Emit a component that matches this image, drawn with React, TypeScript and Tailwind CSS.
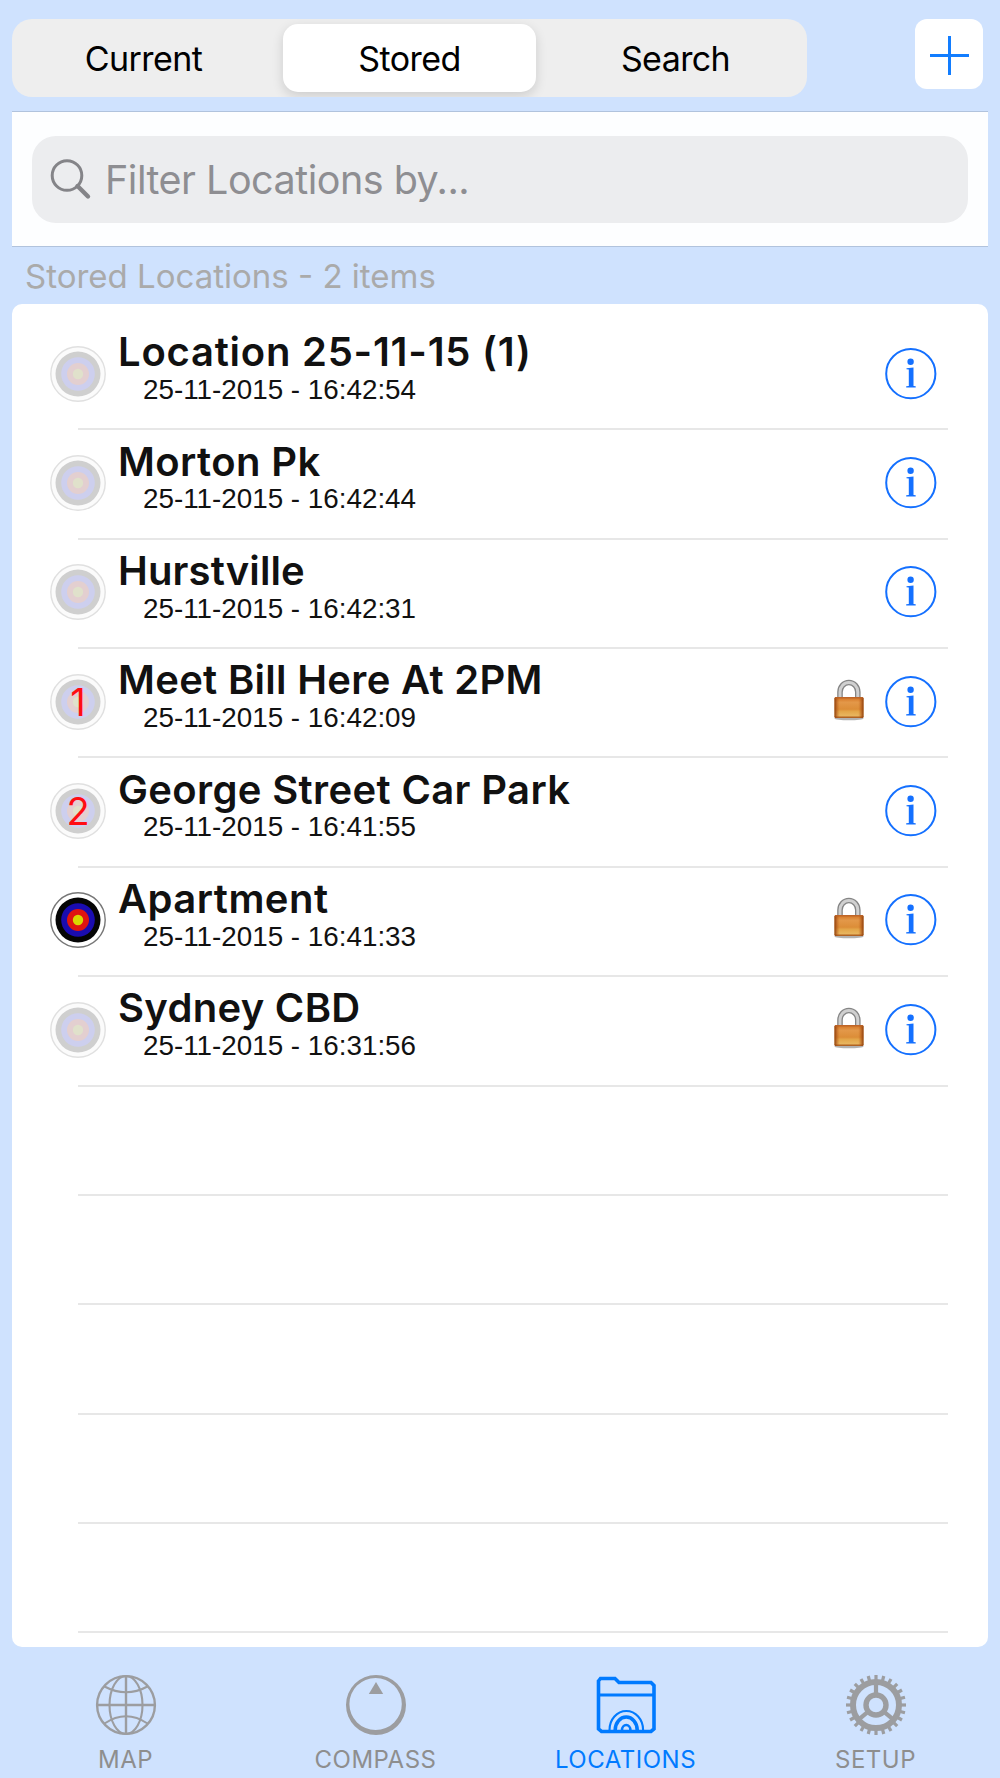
import { useState } from 'react';

type Stored = { name: string; stamp: string; tracking: string; badge?: string; active?: boolean; locked?: boolean };

const LOCATIONS: Stored[] = [
  { name: 'Location 25-11-15 (1)', stamp: '25-11-2015 - 16:42:54', tracking: 'tracking-[0.76px]' },
  { name: 'Morton Pk', stamp: '25-11-2015 - 16:42:44', tracking: 'tracking-[0.4px]' },
  { name: 'Hurstville', stamp: '25-11-2015 - 16:42:31', tracking: 'tracking-[0.12px]' },
  { name: 'Meet Bill Here At 2PM', stamp: '25-11-2015 - 16:42:09', tracking: 'tracking-[0.3px]', badge: '1', locked: true },
  { name: 'George Street Car Park', stamp: '25-11-2015 - 16:41:55', tracking: 'tracking-[0.36px]', badge: '2' },
  { name: 'Apartment', stamp: '25-11-2015 - 16:41:33', tracking: 'tracking-[0.45px]', active: true, locked: true },
  { name: 'Sydney CBD', stamp: '25-11-2015 - 16:31:56', tracking: 'tracking-[0.3px]', locked: true },
];

const EMPTY_ROWS = [0, 1, 2, 3, 4];
const SEGMENTS = ['Current', 'Stored', 'Search'];
const GEAR_TEETH = Array.from({ length: 24 }, (_, i) => i * 15);

function Target({ badge, active }: { badge?: string; active?: boolean }) {
  const [edge, rim, outer, middle, inner, core] = active
    ? ['#777', '#fff', '#050505', '#1a0cb0', '#e01410', '#d8d800']
    : ['#e0e0e0', '#fbfbfb', '#cfcfcf', '#cdcfee', '#e3cfd0', '#e0e1cb'];
  return (
    <svg viewBox="0 0 56 56" className="w-14 h-14 shrink-0">
      <circle cx="28" cy="28" r="27.2" fill={rim} stroke={edge} strokeWidth="1.4" />
      <circle cx="28" cy="28" r="22.5" fill={outer} />
      <circle cx="28" cy="28" r="16.8" fill={middle} />
      <circle cx="28" cy="28" r="11" fill={inner} />
      <circle cx="28" cy="28" r="5.2" fill={core} />
      {badge && <text x="28" y="42" textAnchor="middle" fontSize="38" fill="#ff0d12" fontFamily="Inter, sans-serif">{badge}</text>}
    </svg>
  );
}

function Lock() {
  return (
    <svg viewBox="0 0 32 42" className="w-8 h-[42px]">
      <defs>
        <linearGradient id="brass" x1="0" y1="0" x2="0" y2="1">
          <stop offset="0" stopColor="#d3701f" />
          <stop offset="0.25" stopColor="#e39849" />
          <stop offset="0.58" stopColor="#dc8d38" />
          <stop offset="0.68" stopColor="#e3a548" />
          <stop offset="0.88" stopColor="#e8b55e" />
          <stop offset="1" stopColor="#a34f14" />
        </linearGradient>
        <linearGradient id="brassEdge" x1="0" y1="0" x2="1" y2="0">
          <stop offset="0" stopColor="#8c3d0c" />
          <stop offset="0.18" stopColor="#c8641c" stopOpacity="0" />
          <stop offset="0.82" stopColor="#c8641c" stopOpacity="0" />
          <stop offset="1" stopColor="#8c3d0c" />
        </linearGradient>
      </defs>
      <ellipse cx="16" cy="39.5" rx="14.5" ry="1.7" fill="#000" opacity="0.3" />
      <path d="M7 19V13a8.900 9.500 0 0 1 17.800 0V19" fill="none" stroke="#858585" strokeWidth="5.6" />
      <path d="M7 19V13a8.900 9.500 0 0 1 17.800 0V19" fill="none" stroke="#d0d0d0" strokeWidth="3" />
      <rect x="1.5" y="18" width="29" height="21" rx="1.5" fill="url(#brass)" />
      <rect x="1.5" y="18" width="29" height="21" rx="1.5" fill="url(#brassEdge)" />
      <path d="M2 18.8h28" stroke="#b9622a" strokeWidth="1.2" />
    </svg>
  );
}

function Info() {
  return (
    <svg viewBox="0 0 52 52" className="w-[52px] h-[52px]" fill="#1470ff">
      <circle cx="25.8" cy="25.7" r="24.6" fill="none" stroke="#1470ff" strokeWidth="2" />
      <circle cx="25.6" cy="13.700" r="3.2" />
      <path d="M21.500 20.200l7-.8v18.600l2.200.3v1.300h-9.500v-1.300l2.600-.3V21.600l-2.300-.3z" />
    </svg>
  );
}

function MapIcon() {
  return (
    <svg viewBox="0 0 62 62" className="w-[62px] h-[62px]" fill="none" stroke="#9c9da0" strokeWidth="2.4">
      <circle cx="31" cy="31" r="28.900" />
      <ellipse cx="31" cy="31" rx="16.5" ry="29" strokeWidth="2.100" />
      <path d="M31 2v58M2 31h58" />
      <path d="M9.500 12.500Q31 24 52.500 12.500M9.500 49.500Q31 35 52.500 49.500" strokeWidth="2.100" />
    </svg>
  );
}

function CompassIcon() {
  return (
    <svg viewBox="0 0 62 62" className="w-[62px] h-[62px]">
      <path fillRule="evenodd" fill="#9c9da0" d="M31 1a30 30 0 1 0 0 60a30 30 0 1 0 0-60zM30.600 4a26.200 26 0 1 1 0 52a26.200 26 0 1 1 0-52z" />
      <path fill="#9c9da0" d="M31 8l7.200 12H23.800z" />
    </svg>
  );
}

function FolderIcon() {
  return (
    <svg viewBox="0 0 62 62" className="w-[62px] h-[62px]" fill="none" stroke="#007aff">
      <path d="M3.500 7l2-2.500h14.500l4 4h32l3 3v43.500l-3 2.500h-49.500l-3-2.500z" strokeWidth="3.600" />
      <path d="M3 21h56" strokeWidth="3" />
      <path d="M14.500 56a16.800 19 0 0 1 33.600 0" strokeWidth="2.100" />
      <path d="M20.200 56a11 13 0 0 1 22 0" strokeWidth="3.600" />
      <path d="M27 56a4.200 5 0 0 1 8.400 0" strokeWidth="2.600" />
    </svg>
  );
}

function GearIcon() {
  return (
    <svg viewBox="0 0 62 62" className="w-[62px] h-[62px]" fill="none" stroke="#9c9da0">
      <circle cx="31" cy="31" r="23" strokeWidth="6" />
      <circle cx="31" cy="31" r="10" strokeWidth="5.400" />
      {GEAR_TEETH.map((a) => <path key={a} d="M31 7V1" strokeWidth="3.200" transform={`rotate(${a} 31 31)`} />)}
      {[0, 130, 230].map((a) => <path key={a} d="M31 20V9" strokeWidth="4.200" transform={`rotate(${a} 31 31)`} />)}
    </svg>
  );
}

const TABS = [
  { label: 'MAP', Icon: MapIcon },
  { label: 'COMPASS', Icon: CompassIcon },
  { label: 'LOCATIONS', Icon: FolderIcon },
  { label: 'SETUP', Icon: GearIcon },
];

export default function App() {
  const [segment, setSegment] = useState('Stored');
  const [tab, setTab] = useState('LOCATIONS');

  return (
    <div className="w-[1000px] h-[1778px] bg-[#cfe2fe] px-3 pt-[19px] flex flex-col overflow-hidden font-[Inter,sans-serif]">
      <div className="flex items-start justify-between pr-[5px] h-[92px] shrink-0">
        <div className="w-[795px] h-[78px] rounded-[20px] bg-[#eee] flex items-center py-[5px] overflow-hidden">
          {SEGMENTS.map((s) => (
            <button key={s} onClick={() => setSegment(s)} className={`h-[68px] text-[34px] tracking-[-0.6px] text-black ${segment === s ? 'w-[253px] mx-2 bg-white rounded-[15px] shadow-[0_4px_12px_rgba(0,0,0,0.14)]' : 'flex-1'}`}>{s}</button>
          ))}
        </div>
        <button aria-label="Add location" className="w-[68px] h-[70px] rounded-xl bg-white flex items-center justify-center">
          <svg viewBox="0 0 40 40" className="w-10 h-10 mt-0.5" stroke="#127dff" strokeWidth="3"><path d="M20.500 1v39M1 20.500h39" /></svg>
        </button>
      </div>

      <div className="h-[136px] shrink-0 bg-[#fdfeff] border-y border-[#b1c3dd] px-5 flex items-center">
        <div className="w-full h-[87px] rounded-[24px] bg-[#ecedef] flex items-center pl-[18px] gap-[13px]">
          <svg viewBox="0 0 42 42" className="w-[42px] h-[42px]" fill="none" stroke="#848488"><circle cx="17" cy="17.500" r="14.800" strokeWidth="3" /><path d="M27.500 28l10.500 10.500" strokeWidth="4.400" strokeLinecap="round" /></svg>
          <span className="text-[39.500px] pt-[4px] tracking-[-0.5px] text-[#8e8e92]">Filter Locations by...</span>
        </div>
      </div>

      <div className="h-[57px] shrink-0 pl-[13px] pt-[3px] flex items-center text-[33px] text-[#aaa]">Stored Locations - 2 items</div>

      <div className="h-[1343px] shrink-0 bg-white rounded-[10px] pt-[15.500px] pl-[38px] pr-[40px] overflow-hidden">
        {LOCATIONS.map((loc) => (
          <div key={loc.name} className="h-[109.360px] flex relative">
            <div className="pt-[26px]"><Target badge={loc.badge} active={loc.active} /></div>
            <div className="pl-3 pt-[12.800px] flex-1 whitespace-nowrap">
              <div className={`text-[40px] leading-10 font-semibold text-[#111] ${loc.tracking}`}>{loc.name}</div>
              <div className="mt-[3.700px] pl-[25px] text-[27.800px] leading-7 text-[#111] font-['Liberation_Sans',sans-serif]">{loc.stamp}</div>
            </div>
            <div className="flex items-start gap-[20px] pr-[11px] pt-[28px]">
              {loc.locked && <div className="pt-[3px]"><Lock /></div>}
              <Info />
            </div>
            <div className="absolute left-[28px] right-0 -bottom-[1.5px] h-[2px] bg-[#e7e7e7]" />
          </div>
        ))}
        <div className="pt-[1.500px]">
          {EMPTY_ROWS.map((r) => <div key={r} className="h-[109.360px] ml-[28px] border-b-2 border-[#e7e7e7]" />)}
        </div>
      </div>

      <nav className="flex -mx-3 pt-[27px]">
        {TABS.map(({ label, Icon }) => (
          <button key={label} onClick={() => setTab(label)} className={`w-[250px] pl-px flex flex-col items-center text-[24px] leading-6 tracking-[0.5px] ${tab === label ? 'text-[#007aff]' : 'text-[#8e8e8e]'}`}>
            <Icon />
            <span className="mt-[12px]">{label}</span>
          </button>
        ))}
      </nav>
    </div>
  );
}
